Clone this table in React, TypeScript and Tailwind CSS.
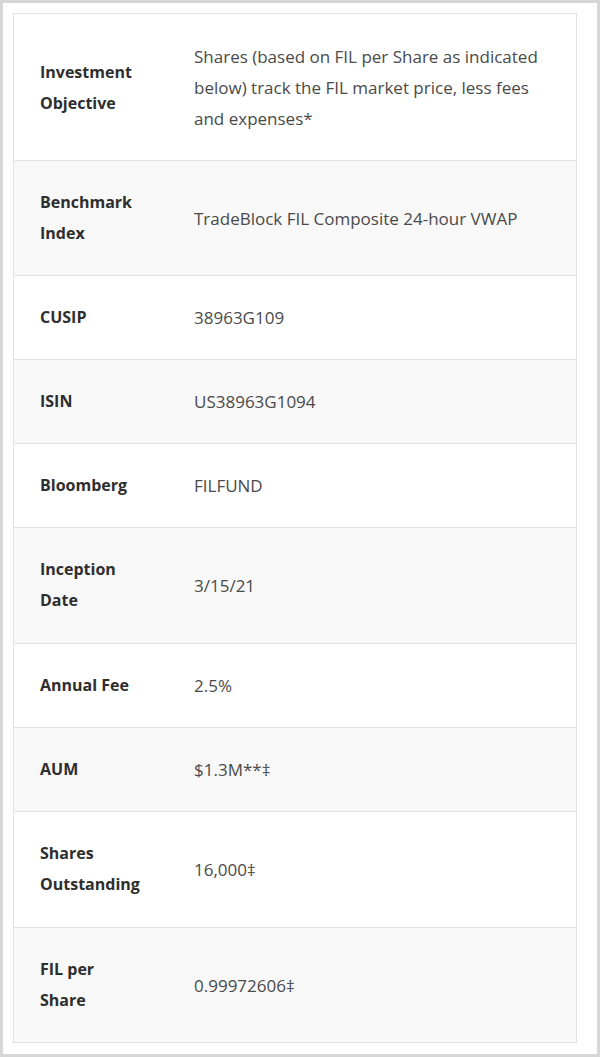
import React from "react";

const rows: { label: string[]; value: string[]; pad: string }[] = [
  { label: ["Investment", "Objective"], value: ["Shares (based on FIL per Share as indicated", "below) track the FIL market price, less fees", "and expenses*"], pad: "pt-[27px] pb-[26px]" },
  { label: ["Benchmark", "Index"], value: ["TradeBlock FIL Composite 24-hour VWAP"], pad: "py-[26px]" },
  { label: ["CUSIP"], value: ["38963G109"], pad: "py-[26px]" },
  { label: ["ISIN"], value: ["US38963G1094"], pad: "py-[26px]" },
  { label: ["Bloomberg"], value: ["FILFUND"], pad: "py-[26px]" },
  { label: ["Inception", "Date"], value: ["3/15/21"], pad: "pt-[26px] pb-[27px]" },
  { label: ["Annual Fee"], value: ["2.5%"], pad: "py-[26px]" },
  { label: ["AUM"], value: ["$1.3M**‡"], pad: "py-[26px]" },
  { label: ["Shares", "Outstanding"], value: ["16,000‡"], pad: "pt-[26px] pb-[27px]" },
  { label: ["FIL per", "Share"], value: ["0.99972606‡"], pad: "py-[26px]" },
];

export default function App() {
  return (
    <div className="w-[600px] h-[1057px] border-[3px] border-[#d6d6d6] bg-white pt-[10px] px-[10px] font-['Open_Sans','Liberation_Sans',sans-serif]">
      <div className="w-[564px] border border-[#e2e2e2]">
        {rows.map((r, i) => (
          <div
            key={i}
            className={`flex items-center ${r.pad} ${i > 0 ? "border-t border-[#e2e2e2]" : ""} ${i % 2 === 1 ? "bg-[#f8f8f8]" : "bg-white"}`}
          >
            <div className="w-[180px] shrink-0 pl-[26px] text-[16px] leading-[31px] font-bold text-[#2e2e2e]">
              {r.label.map((l, j) => (
                <div key={j} className="whitespace-nowrap">{l}</div>
              ))}
            </div>
            <div className="flex-1 text-[17px] leading-[31px] text-[#4a4a4a]">
              {r.value.map((l, j) => (
                <div key={j} className="whitespace-nowrap">{l}</div>
              ))}
            </div>
          </div>
        ))}
      </div>
    </div>
  );
}
